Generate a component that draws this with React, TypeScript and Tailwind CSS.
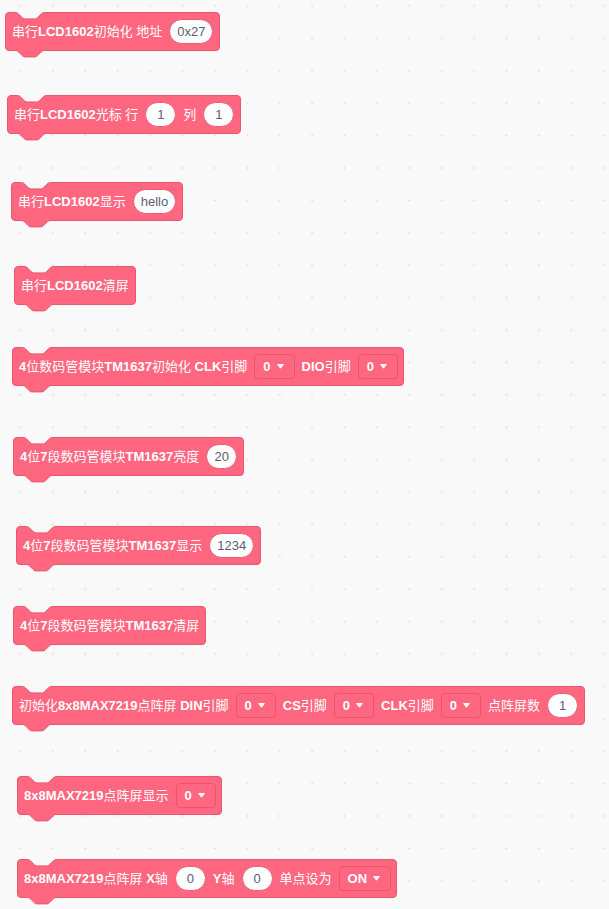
import React from "react";

const NOTCH =
  "M0,0 c2,0 3,1 4,2 l4,4 c1,1 2,2 4,2 h12 c2,0 3,-1 4,-2 l4,-4 c1,-1 2,-2 4,-2";

function TopNotch() {
  return (
    <svg className="absolute left-[9px] top-[-1px]" width="31" height="9" viewBox="0 0 31 9">
      <g transform="translate(0.5,0.5) scale(0.8)">
        <path d={NOTCH + " L36,-2 L0,-2 Z"} fill="#f9f9f9" />
        <path d={NOTCH} fill="none" stroke="#e9576f" strokeWidth="1.25" />
      </g>
    </svg>
  );
}

function BottomTab() {
  return (
    <svg className="absolute left-[9px] top-full" width="31" height="9" viewBox="0 0 31 9">
      <g transform="translate(0.5,0.5) scale(0.8)">
        <path d={NOTCH + " L36,-2 L0,-2 Z"} fill="#ff6680" />
        <path d={NOTCH} fill="none" stroke="#e9576f" strokeWidth="1.25" />
      </g>
    </svg>
  );
}

function Label({ text }: { text: string }) {
  const parts = text.split(/([A-Za-z0-9]+)/).filter((p) => p.length > 0);
  return (
    <span className="whitespace-pre leading-none">
      {parts.map((p, i) =>
        /[A-Za-z0-9]/.test(p) ? (
          <span key={i} className="font-bold">
            {p}
          </span>
        ) : (
          <span key={i}>{p}</span>
        )
      )}
    </span>
  );
}

function Pill({ value }: { value: string }) {
  return (
    <span className="flex h-[25px] min-w-[31px] items-center justify-center rounded-full border border-[#ea5b73] bg-white px-[7px] text-[13px] leading-none text-[#575e75]">
      {value}
    </span>
  );
}

function Dropdown({ value }: { value: string }) {
  return (
    <span className="flex h-[25px] items-center gap-[6px] rounded-[4px] border border-[#e8566e] bg-[#ff6680] pl-[8px] pr-[10px] text-[13px] leading-none text-white">
      <span className="font-bold">{value}</span>
      <svg width="7" height="5" viewBox="0 0 7 5">
        <path d="M0.6,0.6 L6.4,0.6 L3.5,4.2 Z" fill="#ffffff" stroke="#ffffff" strokeWidth="1" strokeLinejoin="round" />
      </svg>
    </span>
  );
}

function Block({ cls, children }: { cls: string; children: React.ReactNode }) {
  return (
    <div
      className={`relative flex h-[39px] items-center gap-[7px] rounded-[4px] border border-[#e9576f] bg-[#ff6680] pl-[6px] text-[13px] text-white ${cls}`}
    >
      <TopNotch />
      {children}
      <BottomTab />
    </div>
  );
}

export default function App() {
  return (
    <div className="relative h-[909px] w-[609px] overflow-hidden bg-[#f9f9f9] font-['Liberation_Sans','Noto_Sans_CJK_SC',sans-serif]">
      <svg className="absolute inset-0" width="609" height="909">
        <defs>
          <pattern id="dots" x="4.3" y="-10.2" width="32.4" height="32.4" patternUnits="userSpaceOnUse">
            <circle cx="16.2" cy="16.2" r="1" fill="#dcdcdc" />
          </pattern>
        </defs>
        <rect width="609" height="909" fill="url(#dots)" />
      </svg>
      <div className="relative flex flex-col items-start">
        <Block cls="ml-[5px] mt-[12px] pr-[6px]">
          <Label text="串行LCD1602初始化 地址" />
          <Pill value="0x27" />
        </Block>
        <Block cls="ml-[7px] mt-[44px] pr-[6px]">
          <Label text="串行LCD1602光标 行" />
          <Pill value="1" />
          <Label text="列" />
          <Pill value="1" />
        </Block>
        <Block cls="ml-[11px] mt-[48px] pr-[6px]">
          <Label text="串行LCD1602显示" />
          <Pill value="hello" />
        </Block>
        <Block cls="ml-[14px] mt-[45px] pr-[6px]">
          <Label text="串行LCD1602清屏" />
        </Block>
        <Block cls="ml-[12px] mt-[42px] pr-[5px]">
          <Label text="4位数码管模块TM1637初始化 CLK引脚" />
          <Dropdown value="0" />
          <Label text="DIO引脚" />
          <Dropdown value="0" />
        </Block>
        <Block cls="ml-[13px] mt-[51px] pr-[6px]">
          <Label text="4位7段数码管模块TM1637亮度" />
          <Pill value="20" />
        </Block>
        <Block cls="ml-[16px] mt-[50px] pr-[6px]">
          <Label text="4位7段数码管模块TM1637显示" />
          <Pill value="1234" />
        </Block>
        <Block cls="ml-[13px] mt-[41px] pr-[6px]">
          <Label text="4位7段数码管模块TM1637清屏" />
        </Block>
        <Block cls="ml-[12px] mt-[41px] pr-[6px]">
          <Label text="初始化8x8MAX7219点阵屏 DIN引脚" />
          <Dropdown value="0" />
          <Label text="CS引脚" />
          <Dropdown value="0" />
          <Label text="CLK引脚" />
          <Dropdown value="0" />
          <Label text="点阵屏数" />
          <Pill value="1" />
        </Block>
        <Block cls="ml-[17px] mt-[51px] pr-[5px]">
          <Label text="8x8MAX7219点阵屏显示" />
          <Dropdown value="0" />
        </Block>
        <Block cls="ml-[17px] mt-[44px] pr-[5px]">
          <Label text="8x8MAX7219点阵屏 X轴" />
          <Pill value="0" />
          <Label text="Y轴" />
          <Pill value="0" />
          <Label text="单点设为" />
          <Dropdown value="ON" />
        </Block>
      </div>
    </div>
  );
}
